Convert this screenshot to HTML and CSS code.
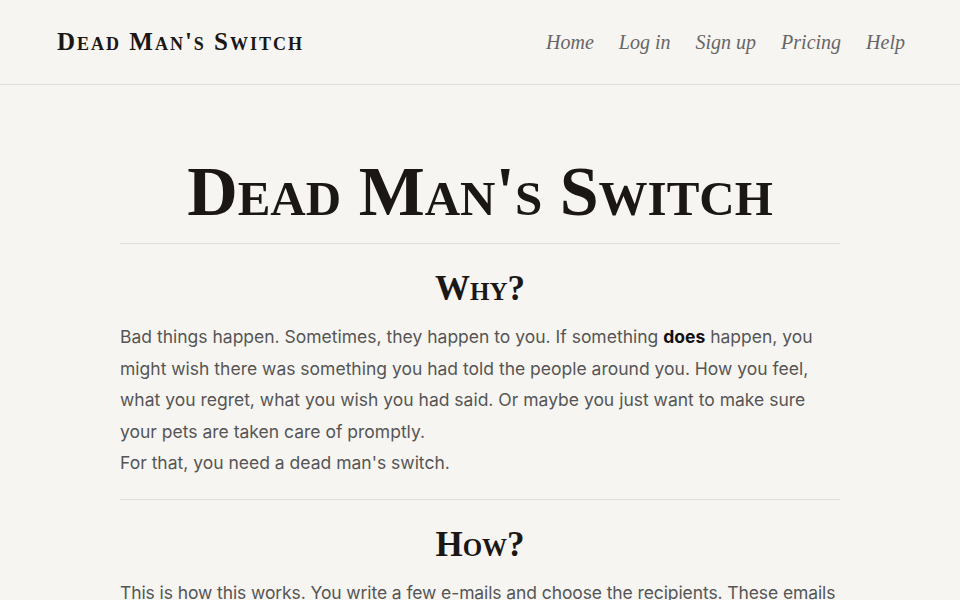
FILE: index.html
```html
<!DOCTYPE html>
<html lang="en">
<head>
    <meta charset="UTF-8">
    <meta name="viewport" content="width=device-width, initial-scale=1.0">
    <title>Dead Man's Switch</title>
    <link rel="stylesheet" href="styles.css">
</head>
<body>
    <header class="topbar">
        <a class="brand" href="/">Dead Man's Switch</a>
        <nav class="nav">
            <a href="/">Home</a>
            <a href="/login">Log in</a>
            <a href="/signup">Sign up</a>
            <a href="/pricing">Pricing</a>
            <a href="/help">Help</a>
        </nav>
    </header>

    <main class="content">
        <h1 class="title">Dead Man's Switch</h1>
        <hr>
        <section>
            <h2>Why?</h2>
            <p>Bad things happen. Sometimes, they happen to you. If something <strong>does</strong> happen, you might wish there was something you had told the people around you. How you feel, what you regret, what you wish you had said. Or maybe you just want to make sure your pets are taken care of promptly.<br>For that, you need a dead man's switch.</p>
        </section>
        <hr>
        <section class="how">
            <h2>How?</h2>
            <p>This is how this works. You write a few e-mails and choose the recipients. These emails will be sent if you stop responding to our check-ins.</p>
        </section>
    </main>
</body>
</html>
```

FILE: styles.css
```css
body {
    margin: 0;
    background-color: #f7f5f2;
    font-family: "Inter", "Noto Sans", sans-serif;
    color: #555;
}

a {
    text-decoration: none;
}

.topbar {
    display: flex;
    justify-content: space-between;
    align-items: center;
    height: 84px;
    padding: 0 55px 0 57px;
    border-bottom: 1px solid #e2ddd8;
}

.brand {
    font-family: "Liberation Serif", serif;
    font-variant: small-caps;
    font-weight: bold;
    font-size: 25px;
    letter-spacing: 2px;
    color: #1a1714;
}

.nav {
    display: flex;
    gap: 25px;
}

.nav a {
    font-family: "Liberation Serif", serif;
    font-style: italic;
    font-size: 20px;
    color: #666;
}

.content {
    width: 720px;
    margin: 0 auto;
    padding-top: 65px;
}

.title {
    margin: 0 0 9px;
    text-align: center;
    font-family: "Liberation Serif", serif;
    font-variant: small-caps;
    font-size: 70px;
    line-height: 1.2;
    color: #1a1714;
}

hr {
    border: none;
    border-top: 1px solid #e2ddd8;
    margin: 0;
}

h2 {
    margin: 25px 0 12px;
    text-align: center;
    font-family: "Liberation Serif", serif;
    font-variant: small-caps;
    font-size: 35px;
    color: #1a1714;
}

p {
    margin: 0 0 20px;
    font-size: 17.5px;
    line-height: 31.6px;
}

.how p {
    letter-spacing: -0.1px;
}

strong {
    color: #111;
}
```
